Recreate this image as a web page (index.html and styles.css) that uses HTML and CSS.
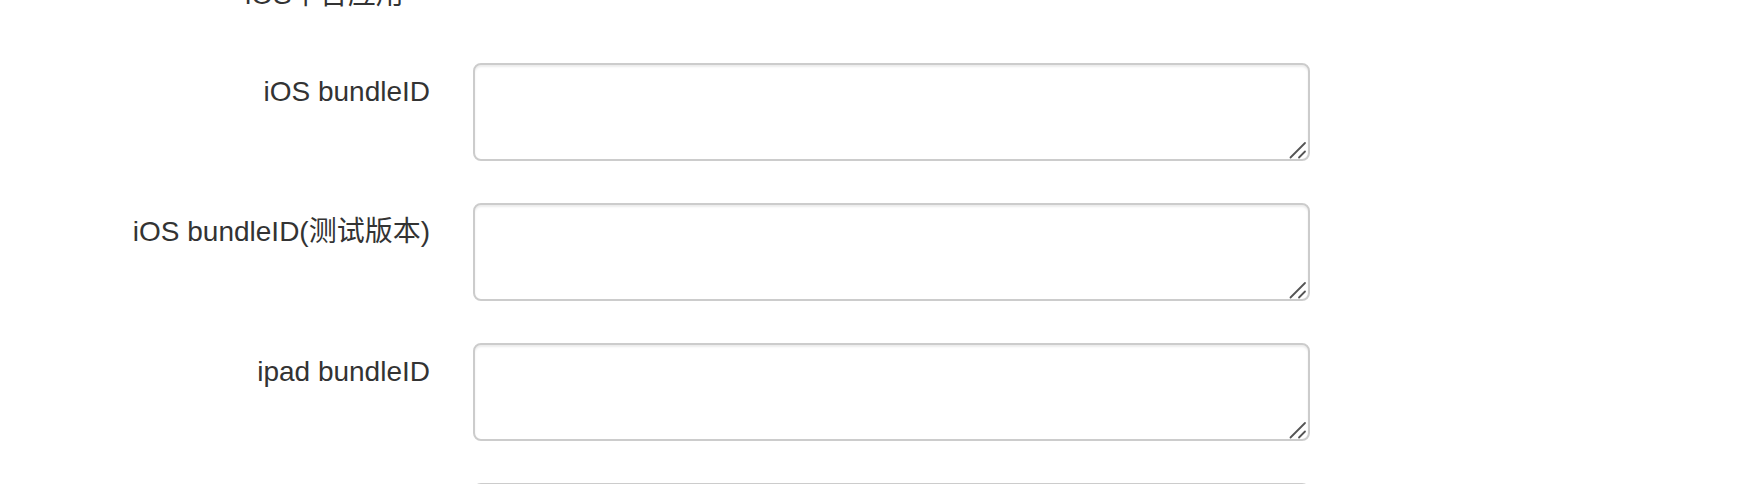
FILE: index.html
```html
<!DOCTYPE html>
<html lang="zh">
<head>
<meta charset="utf-8">
<title>iOS平台应用</title>
<link rel="stylesheet" href="styles.css">
</head>
<body>
<div class="form">
  <div class="legend">iOS平台应用</div>
  <div class="grid">
    <label class="label">iOS bundleID</label>
    <div class="field"><textarea class="input" rows="2"></textarea><svg class="grip" width="18" height="18" viewBox="0 0 18 18"><path d="M1.5 16.5 L16 2 M10 16.5 L16 10.5" stroke="#555" stroke-width="1.8" stroke-linecap="round" fill="none"/></svg></div>

    <label class="label">iOS bundleID(测试版本)</label>
    <div class="field"><textarea class="input" rows="2"></textarea><svg class="grip" width="18" height="18" viewBox="0 0 18 18"><path d="M1.5 16.5 L16 2 M10 16.5 L16 10.5" stroke="#555" stroke-width="1.8" stroke-linecap="round" fill="none"/></svg></div>

    <label class="label">ipad bundleID</label>
    <div class="field"><textarea class="input" rows="2"></textarea><svg class="grip" width="18" height="18" viewBox="0 0 18 18"><path d="M1.5 16.5 L16 2 M10 16.5 L16 10.5" stroke="#555" stroke-width="1.8" stroke-linecap="round" fill="none"/></svg></div>

    <label class="label">ipad bundleID(测试版本)</label>
    <div class="field"><textarea class="input" rows="2"></textarea><svg class="grip" width="18" height="18" viewBox="0 0 18 18"><path d="M1.5 16.5 L16 2 M10 16.5 L16 10.5" stroke="#555" stroke-width="1.8" stroke-linecap="round" fill="none"/></svg></div>
  </div>
</div>
</body>
</html>
```

FILE: styles.css
```css
html, body {
  margin: 0;
  padding: 0;
  background: #fff;
}

body {
  font-family: "Liberation Sans", Arial, "Noto Sans CJK SC", sans-serif;
  font-size: 28px;
  line-height: 40px;
  color: #333;
  overflow: hidden;
}

.form {
  margin-top: -25px;
}

.legend {
  padding-left: 245px;
  height: 40px;
  margin-bottom: 48px;
  white-space: nowrap;
}

.grid {
  display: grid;
  grid-template-columns: 430px 837px;
  column-gap: 43px;
  row-gap: 42px;
}

.label {
  text-align: right;
  padding-top: 9px;
  white-space: nowrap;
}

.field {
  position: relative;
  height: 98px;
}

.input {
  display: block;
  box-sizing: border-box;
  width: 100%;
  height: 98px;
  margin: 0;
  padding: 12px 24px;
  border: 2px solid #ccc;
  border-radius: 8px;
  box-shadow: inset 0 2px 2px rgba(0, 0, 0, 0.075);
  background: #fff;
  font: inherit;
  color: #555;
  resize: none;
  outline: none;
}

.grip {
  position: absolute;
  right: 3px;
  bottom: 2px;
}
```
